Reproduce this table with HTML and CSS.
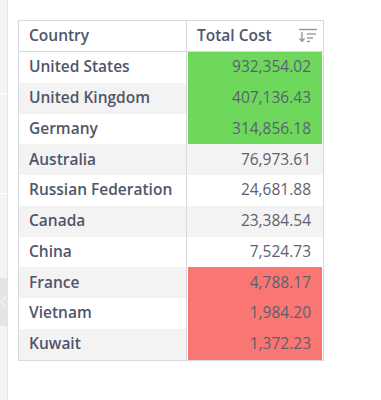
FILE: index.html
```html
<!DOCTYPE html>
<html>
<head>
<meta charset="utf-8">
<link rel="stylesheet" href="styles.css">
</head>
<body>
<div class="page">
  <aside class="side">
    <div class="seg seg1"></div>
    <div class="seg seg2"></div>
    <div class="seg seg3"></div>
    <div class="collapse">
      <svg width="7" height="12" viewBox="0 0 7 12"><path d="M6 1 L1 6 L6 11" fill="none" stroke="#f4f4f4" stroke-width="1.4"/></svg>
    </div>
    <div class="seg seg4"></div>
  </aside>
  <main class="main">
    <table class="grid">
      <thead>
        <tr>
          <th class="c1">Country</th>
          <th class="c2"><span class="hd">Total Cost
            <svg class="sort" width="20" height="15" viewBox="0 0 20 15"><g stroke="#8c909b" stroke-width="1.3" fill="none"><path d="M1 1.5 H19"/><path d="M4 4 V13"/><path d="M1.5 10.5 L4 13.2 L6.5 10.5"/><path d="M9 6 H18"/><path d="M9 10 H15"/><path d="M9 13.5 H12"/></g></svg></span></th>
        </tr>
      </thead>
      <tbody>
        <tr><td class="c1">United States</td><td class="c2 good">932,354.02</td></tr>
        <tr class="alt"><td class="c1">United Kingdom</td><td class="c2 good">407,136.43</td></tr>
        <tr><td class="c1">Germany</td><td class="c2 good">314,856.18</td></tr>
        <tr class="alt"><td class="c1">Australia</td><td class="c2">76,973.61</td></tr>
        <tr><td class="c1">Russian Federation</td><td class="c2">24,681.88</td></tr>
        <tr class="alt"><td class="c1">Canada</td><td class="c2">23,384.54</td></tr>
        <tr><td class="c1">China</td><td class="c2">7,524.73</td></tr>
        <tr class="alt"><td class="c1">France</td><td class="c2 bad">4,788.17</td></tr>
        <tr><td class="c1">Vietnam</td><td class="c2 bad">1,984.20</td></tr>
        <tr class="alt"><td class="c1">Kuwait</td><td class="c2 bad">1,372.23</td></tr>
      </tbody>
    </table>
  </main>
</div>
</body>
</html>
```
FILE: styles.css
```css
html, body {
  margin: 0;
  padding: 0;
  background: #ffffff;
}
body {
  font-family: "Open Sans", "Noto Sans", sans-serif;
  width: 381px;
  height: 400px;
  overflow: hidden;
}
.page {
  display: flex;
  height: 400px;
}
.side {
  width: 7px;
  border-right: 1px solid #e3e3e5;
  display: flex;
  flex-direction: column;
  flex: none;
}
.seg {
  background: #f4f4f4;
}
.seg1 { height: 93px; }
.seg2 { height: 99px; margin-top: 1px; }
.seg3 { height: 84px; margin-top: 1px; }
.collapse {
  height: 48px;
  background: #e5e5e6;
  display: flex;
  align-items: center;
  justify-content: flex-start;
}
.seg4 { flex: 1; }
.main {
  padding: 20px 0 0 10px;
}
.grid {
  border-collapse: collapse;
  border: 1px solid #d8d9df;
  color: #50566a;
  font-size: 15.5px;
}
.grid th, .grid td {
  padding: 0 0 2px 0;
  line-height: 20px;
}
.grid thead th {
  height: 28px;
  border-bottom: 1px solid #d8d9df;
  font-weight: 600;
  text-align: left;
  background: #fff;
}
.grid .c1 {
  width: 157px;
  padding-left: 10px;
  border-right: 1px solid #d8d9df;
}
.grid .c2 {
  width: 124px;
  padding-right: 12px;
  text-align: right;
}
.grid thead .c2 {
  text-align: left;
  padding-left: 10px;
  padding-right: 0;
  width: 126px;
}
.hd {
  display: flex;
  align-items: center;
  justify-content: space-between;
  padding-right: 5px;
}
.sort { display: block; }
.grid tbody td {
  height: 28.75px;
}
.grid tbody td.c1 {
  font-weight: 600;
}
.grid tbody td.c2 {
  font-weight: 400;
  color: #5c6170;
}
.grid tr.alt td {
  background: #f3f3f3;
}
.grid td.good, .grid tr.alt td.good {
  background: #6dd85c;
  box-shadow: inset 1px 0 0 #fff, inset -1px 0 0 #fff;
}
.grid td.bad, .grid tr.alt td.bad {
  background: #f97672;
  box-shadow: inset 1px 0 0 #fff, inset -1px 0 0 #fff;
}
```
